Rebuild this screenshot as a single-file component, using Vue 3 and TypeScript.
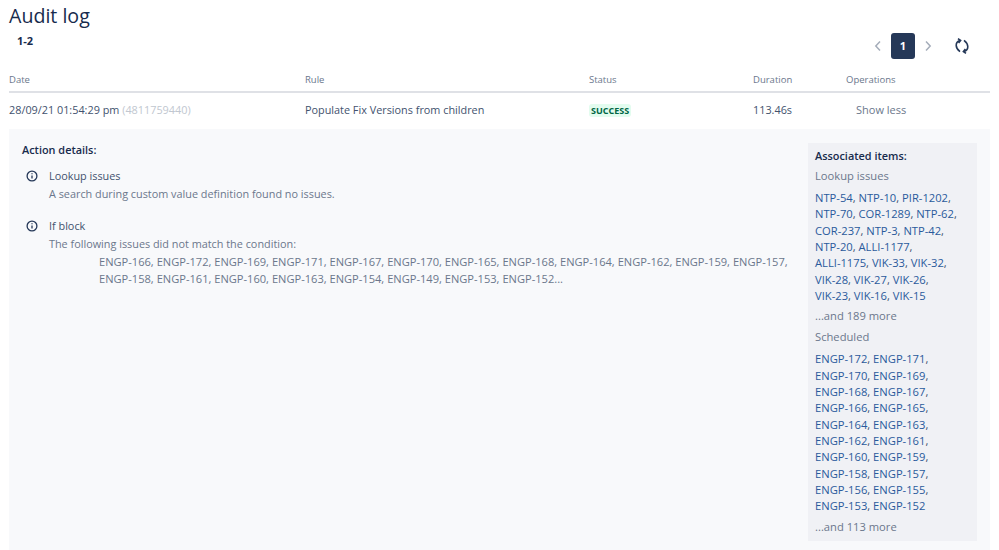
<script setup lang="ts">
const lookup = ['NTP-54','NTP-10','PIR-1202','NTP-70','COR-1289','NTP-62','COR-237','NTP-3','NTP-42','NTP-20','ALLI-1177','ALLI-1175','VIK-33','VIK-32','VIK-28','VIK-27','VIK-26','VIK-23','VIK-16','VIK-15']
const scheduled = ['ENGP-172','ENGP-171','ENGP-170','ENGP-169','ENGP-168','ENGP-167','ENGP-166','ENGP-165','ENGP-164','ENGP-163','ENGP-162','ENGP-161','ENGP-160','ENGP-159','ENGP-158','ENGP-157','ENGP-156','ENGP-155','ENGP-153','ENGP-152']
const failed = ['ENGP-166','ENGP-172','ENGP-169','ENGP-171','ENGP-167','ENGP-170','ENGP-165','ENGP-168','ENGP-164','ENGP-162','ENGP-159','ENGP-157','ENGP-158','ENGP-161','ENGP-160','ENGP-163','ENGP-154','ENGP-149','ENGP-153','ENGP-152']
</script>

<template>
  <div class="page">
    <h1 class="title">Audit log</h1>
    <div class="toolbar">
      <span class="count">1-2</span>
      <div class="pager">
        <svg class="chev" width="8" height="12" viewBox="0 0 8 12"><path d="M6 1.5 1.8 6 6 10.5" /></svg>
        <span class="current">1</span>
        <svg class="chev" width="8" height="12" viewBox="0 0 8 12"><path d="M2 1.5 6.2 6 2 10.5" /></svg>
        <svg class="refresh" width="16" height="16" viewBox="0 0 16 16">
          <path d="M6 13.6C3.4 11.6 2.2 9.2 2.2 7.2 2.2 5 3.6 3.2 6 2.6" />
          <path d="M4 .7 6.6 2.5 4.6 5" />
          <path d="M10 2.4C12.6 4.4 13.8 6.8 13.8 8.8 13.8 11 12.4 12.8 10 13.4" />
          <path d="M12 15.3 9.4 13.5 11.4 11" />
        </svg>
      </div>
    </div>
    <div class="grid head">
      <span>Date</span><span>Rule</span><span>Status</span><span>Duration</span><span>Operations</span>
    </div>
    <div class="grid row">
      <span>28/09/21 01:54:29 pm <span class="muted">(4811759440)</span></span>
      <span>Populate Fix Versions from children</span>
      <span><span class="lozenge">SUCCESS</span></span>
      <span>113.46s</span>
      <span class="op">Show less</span>
    </div>
    <div class="details">
      <div class="main">
        <div class="heading">Action details:</div>
        <div class="action">
          <svg class="info" width="12" height="12" viewBox="0 0 12 12">
            <circle cx="6" cy="6" r="4.9" /><path d="M6 5.4v3.1M6 3.2v1" />
          </svg>
          <div>
            <div class="a-title">Lookup issues</div>
            <div class="a-text">A search during custom value definition found no issues.</div>
          </div>
        </div>
        <div class="action">
          <svg class="info" width="12" height="12" viewBox="0 0 12 12">
            <circle cx="6" cy="6" r="4.9" /><path d="M6 5.4v3.1M6 3.2v1" />
          </svg>
          <div>
            <div class="a-title">If block</div>
            <div class="a-text">The following issues did not match the condition:</div>
            <div class="a-list">
              <template v-for="(k, i) in failed" :key="k"><span class="nb">{{ k }}{{ i < failed.length - 1 ? ',' : '...' }}</span>{{ ' ' }}</template>
            </div>
          </div>
        </div>
      </div>
      <aside class="side">
        <div class="heading">Associated items:</div>
        <div class="s-label">Lookup issues</div>
        <div class="links">
          <template v-for="(k, i) in lookup" :key="k"><span class="nb"><a>{{ k }}</a>{{ i < lookup.length - 1 ? ',' : '' }}</span>{{ ' ' }}</template>
        </div>
        <div class="s-more">...and 189 more</div>
        <div class="s-label">Scheduled</div>
        <div class="links">
          <template v-for="(k, i) in scheduled" :key="k"><span class="nb"><a>{{ k }}</a>{{ i < scheduled.length - 1 ? ',' : '' }}</span>{{ ' ' }}</template>
        </div>
        <div class="s-more">...and 113 more</div>
      </aside>
    </div>
  </div>
</template>

<style>
html, body { margin: 0; background: #fff; overflow: hidden; }
</style>

<style scoped>
.page {
  width: 999px;
  height: 550px;
  box-sizing: border-box;
  padding: 0 9px;
  overflow: hidden;
  font-family: "Open Sans", "Noto Sans", sans-serif;
  font-size: 10.85px;
  color: #42526e;
}
.title {
  margin: 0;
  font-size: 19.6px;
  line-height: 32px;
  font-weight: 400;
  color: #172b4d;
}
.toolbar {
  display: flex;
  justify-content: space-between;
  height: 31px;
  padding-left: 8px;
}
.count {
  font-weight: 700;
  font-size: 11px;
  line-height: 18px;
  color: #172b4d;
}
.pager {
  display: flex;
  align-items: center;
  height: 26px;
  margin-top: 1px;
  padding-right: 20px;
}
.chev { fill: none; stroke: #a5adba; stroke-width: 1.5; }
.current {
  width: 24px;
  height: 26px;
  margin: 0 9px;
  border-radius: 3px;
  background: #253858;
  color: #fff;
  font-weight: 700;
  font-size: 11px;
  line-height: 26px;
  text-align: center;
}
.refresh { margin-left: 22px; fill: none; stroke: #253858; stroke-width: 1.6; }
.grid {
  display: grid;
  grid-template-columns: 296px 284px 164px 93px 144px;
}
.head {
  height: 30px;
  box-sizing: border-box;
  padding-top: 9px;
  font-size: 9.5px;
  line-height: 16px;
  color: #6b778c;
  border-bottom: 2px solid #dfe1e6;
}
.row {
  height: 36px;
  box-sizing: border-box;
  padding-bottom: 4px;
  align-items: center;
}
.muted { color: #c1c7d0; }
.lozenge {
  display: inline-block;
  padding: 0 2px;
  border-radius: 3px;
  background: #e3fcef;
  color: #006644;
  font-size: 9px;
  font-weight: 700;
  line-height: 13px;
}
.op { padding-left: 10px; font-size: 11px; color: #6b778c; }
.details {
  display: flex;
  justify-content: space-between;
  height: 421px;
  box-sizing: border-box;
  padding: 14px 13px 9px 13px;
  background: #f8f9fb;
}
.main { width: 770px; }
.heading {
  font-weight: 600;
  font-size: 10.9px;
  line-height: 14px;
  color: #172b4d;
}
.action {
  display: flex;
  gap: 11px;
  margin: 11px 0 0 4px;
  padding-bottom: 3px;
}
.info { flex: none; margin-top: 2px; fill: none; stroke: #253858; stroke-width: 1.3; }
.a-title { line-height: 16px; color: #42526e; }
.a-text { line-height: 19.5px; color: #6b778c; }
.a-list { width: 700px; margin-left: 50px; font-size: 11.1px; line-height: 17px; color: #6b778c; }
.nb { white-space: nowrap; }
.side {
  width: 169px;
  box-sizing: border-box;
  padding: 6px 13px 6px 7px;
  background: #f0f1f5;
  font-size: 11.2px;
}
.s-label { margin-top: 5px; line-height: 16px; color: #6b778c; }
.links { margin-top: 6px; line-height: 16.33px; }
.links a { color: #2a5a9c; }
.s-more { margin-top: 4px; line-height: 16px; color: #6b778c; }
</style>
